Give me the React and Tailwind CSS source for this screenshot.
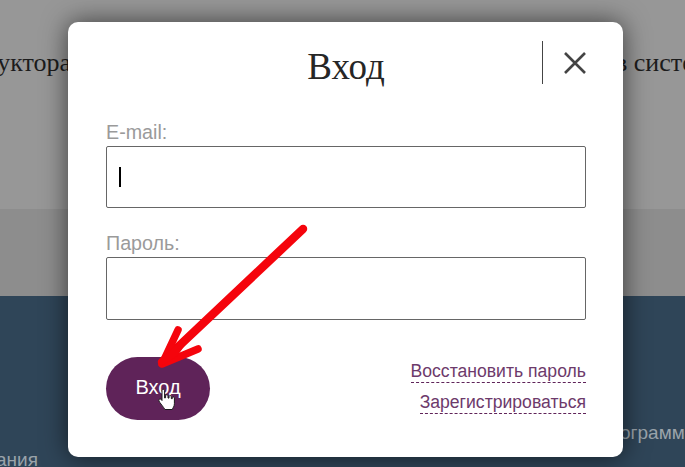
export default function App() {
  return (
    <div className="relative h-[467px] w-[685px] overflow-hidden bg-[#2f4558] font-['Liberation_Sans',sans-serif]">
      <div className="flex h-[209px] items-start justify-between bg-[#979797] pt-[47px] font-['Liberation_Serif',serif] text-[26px] leading-8 text-[#1c1c1c]">
        <div className="flex w-[71px] justify-end whitespace-nowrap">уктора</div>
        <div className="w-[70px] whitespace-nowrap">в систе</div>
      </div>
      <div className="h-[87px] bg-[#8d8d8d]" />
      <div className="flex h-[171px] items-start justify-between text-[19px] font-medium text-[#9aa3aa]">
        <div className="mt-[154px] -ml-[4px] leading-5">ания</div>
        <div className="mt-[127px] w-[65px] whitespace-nowrap leading-5">ограмм</div>
      </div>

      <div className="absolute top-[22px] left-[68px] flex h-[435px] w-[555px] flex-col rounded-[10px] bg-white pr-[37px] pl-[38px] shadow-[0_0_26px_rgba(0,0,0,0.6)]">
        <div className="relative flex h-[62px] items-end justify-center pt-[19px]">
          <h1 className="-mb-[4px] font-['Liberation_Serif',serif] text-[37px] leading-[43px] font-normal text-[#262626]">Вход</h1>
          <div className="absolute top-[19px] right-[43px] h-[43px] w-px bg-[#444]" />
          <svg className="absolute top-[30px] right-0" width="22" height="22" viewBox="0 0 22 22" fill="none" stroke="#444" strokeWidth="2.6">
            <path d="M1 1 21 21M21 1 1 21" />
          </svg>
        </div>

        <label className="mt-[35px] block text-[19.7px] leading-[27px] text-[#9a9a9a]">E-mail:</label>
        <div className="flex h-[62px] items-center rounded-[2px] border border-[#666] bg-white pl-3">
          <div className="h-5 w-[2px] bg-black" />
        </div>

        <label className="mt-[22px] block text-[19.7px] leading-[27px] text-[#9a9a9a]">Пароль:</label>
        <div className="h-[63px] rounded-[2px] border border-[#666] bg-white" />

        <div className="mt-[37px] flex items-start justify-between">
          <button className="h-[63px] w-[104px] rounded-full bg-[#5f2359] pb-[3px] text-[20px] text-white">Вход</button>
          <div className="flex flex-col items-end gap-[9px] pt-[4px] text-[17.6px] leading-[21px] text-[#6d3a6b]">
            <a className="border-b border-dashed border-[#5f2359]">Восстановить пароль</a>
            <a className="border-b border-dashed border-[#5f2359]">Зарегистрироваться</a>
          </div>
        </div>
      </div>

      <svg className="absolute top-0 left-0" width="685" height="467" viewBox="0 0 685 467" fill="none">
        <path d="M303 229 162 362" stroke="#f5040c" strokeWidth="8.5" strokeLinecap="round" />
        <path d="M178 330 162 364 198 349" stroke="#f5040c" strokeWidth="7.5" strokeLinecap="round" strokeLinejoin="round" />
        <path d="M162 362 185 340 175 354Z" fill="#f5040c" stroke="#f5040c" strokeWidth="6" strokeLinejoin="round" />
        <path d="M164 392.5c0-1.6 2.6-1.6 2.6 0v7.5l1-.2v-2c0-1.5 2.4-1.5 2.4 0v2.2l1 .1v-1.5c0-1.4 2.3-1.4 2.3 0v2l.9.2v-.9c0-1.3 2.2-1.3 2.2 0v5.8c0 2.5-1.6 4.5-1.6 4.5l-.4 1.3h-7.5c-1-2-5.4-7-6-8.6-.6-1.5 1-2.6 2.4-1.4l.7 1z" fill="#fff" stroke="#1a1a1a" strokeWidth="1" strokeLinejoin="round" transform="translate(-2 -2)" />
      </svg>
    </div>
  );
}
